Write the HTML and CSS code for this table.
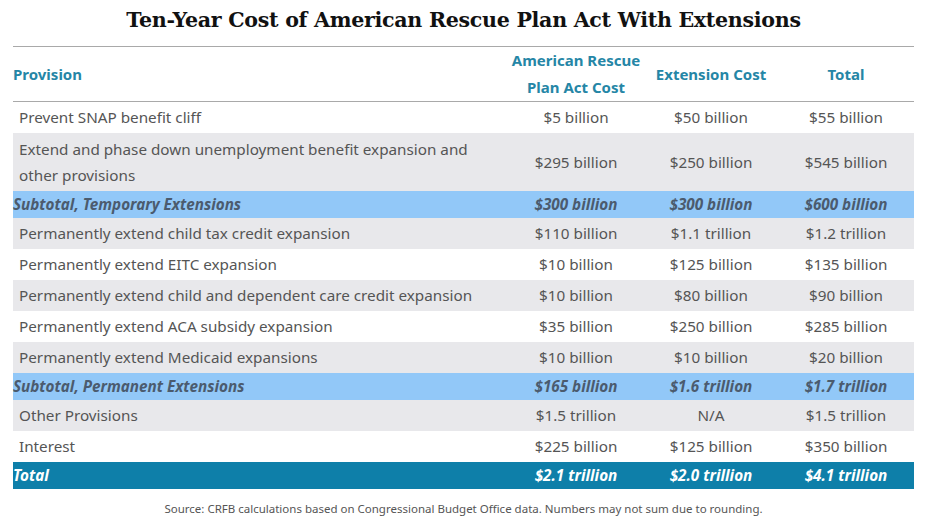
FILE: index.html
```html
<!DOCTYPE html>
<html>
<head>
<meta charset="utf-8">
<link rel="stylesheet" href="styles.css">
</head>
<body>
<div class="page">
  <h1 class="title">Ten-Year Cost of American Rescue Plan Act With Extensions</h1>
  <table class="cost-table">
    <colgroup>
      <col class="c-prov"><col class="c-num"><col class="c-num2"><col class="c-num">
    </colgroup>
    <thead>
      <tr>
        <th class="left">Provision</th>
        <th>American Rescue<br>Plan Act Cost</th>
        <th>Extension Cost</th>
        <th>Total</th>
      </tr>
    </thead>
    <tbody>
      <tr class="w"><td class="prov">Prevent SNAP benefit cliff</td><td>$5 billion</td><td>$50 billion</td><td>$55 billion</td></tr>
      <tr class="g tall"><td class="prov">Extend and phase down unemployment benefit expansion and other provisions</td><td>$295 billion</td><td>$250 billion</td><td>$545 billion</td></tr>
      <tr class="sub"><td class="prov">Subtotal, Temporary Extensions</td><td>$300 billion</td><td>$300 billion</td><td>$600 billion</td></tr>
      <tr class="g"><td class="prov">Permanently extend child tax credit expansion</td><td>$110 billion</td><td>$1.1 trillion</td><td>$1.2 trillion</td></tr>
      <tr class="w"><td class="prov">Permanently extend EITC expansion</td><td>$10 billion</td><td>$125 billion</td><td>$135 billion</td></tr>
      <tr class="g"><td class="prov">Permanently extend child and dependent care credit expansion</td><td>$10 billion</td><td>$80 billion</td><td>$90 billion</td></tr>
      <tr class="w"><td class="prov">Permanently extend ACA subsidy expansion</td><td>$35 billion</td><td>$250 billion</td><td>$285 billion</td></tr>
      <tr class="g"><td class="prov">Permanently extend Medicaid expansions</td><td>$10 billion</td><td>$10 billion</td><td>$20 billion</td></tr>
      <tr class="sub"><td class="prov">Subtotal, Permanent Extensions</td><td>$165 billion</td><td>$1.6 trillion</td><td>$1.7 trillion</td></tr>
      <tr class="g"><td class="prov">Other Provisions</td><td>$1.5 trillion</td><td>N/A</td><td>$1.5 trillion</td></tr>
      <tr class="w"><td class="prov">Interest</td><td>$225 billion</td><td>$125 billion</td><td>$350 billion</td></tr>
      <tr class="total"><td class="prov">Total</td><td>$2.1 trillion</td><td>$2.0 trillion</td><td>$4.1 trillion</td></tr>
    </tbody>
  </table>
  <p class="source">Source: CRFB calculations based on Congressional Budget Office data. Numbers may not sum due to rounding.</p>
</div>
</body>
</html>
```
FILE: styles.css
```css
* { box-sizing: border-box; }
html, body { margin: 0; padding: 0; background: #fff; }
.page {
  width: 933px;
  padding: 7px 19px 0 13px;
  font-family: "Noto Sans", "Liberation Sans", sans-serif;
}
.title {
  margin: 0;
  height: 39px;
  font-family: "DejaVu Serif", serif;
  font-weight: bold;
  font-size: 20.6px;
  line-height: 26px;
  text-align: center;
  color: #111;
  letter-spacing: -0.3px;
}
.cost-table {
  width: 901px;
  border-collapse: collapse;
  border-top: 1px solid #a9a9a9;
  font-size: 15.25px;
  color: #555;
}
.c-prov { width: 495px; }
.c-num { width: 136px; }
.c-num2 { width: 134px; }
.cost-table th {
  color: #2586a6;
  font-weight: bold;
  font-size: 15px;
  line-height: 27px;
  height: 54px;
  padding: 0;
  text-align: center;
  vertical-align: middle;
  border-bottom: 1px solid #a9a9a9;
}
.cost-table th.left { text-align: left; }
.cost-table td {
  padding: 0;
  height: 31px;
  line-height: 26px;
  text-align: center;
  vertical-align: middle;
}
.cost-table td.prov { text-align: left; padding-left: 6px; }
.cost-table tr.tall td { height: 58px; }
.cost-table tr.tall td.prov { padding-right: 24px; }
.g { background: #e8e8eb; }
.w { background: #fff; }
.sub { background: #92c8f8; }
.sub td, .total td { font-weight: bold; font-style: italic; height: 27px; }
.sub td { color: #4b5b6e; }
.cost-table .sub td.prov, .cost-table .total td.prov { padding-left: 0; }
.total { background: #0e7fa9; }
.total td { color: #fff; height: 27px; }
.source {
  margin: 12px 0 0;
  font-size: 11.5px;
  color: #555;
  text-align: center;
}
```
